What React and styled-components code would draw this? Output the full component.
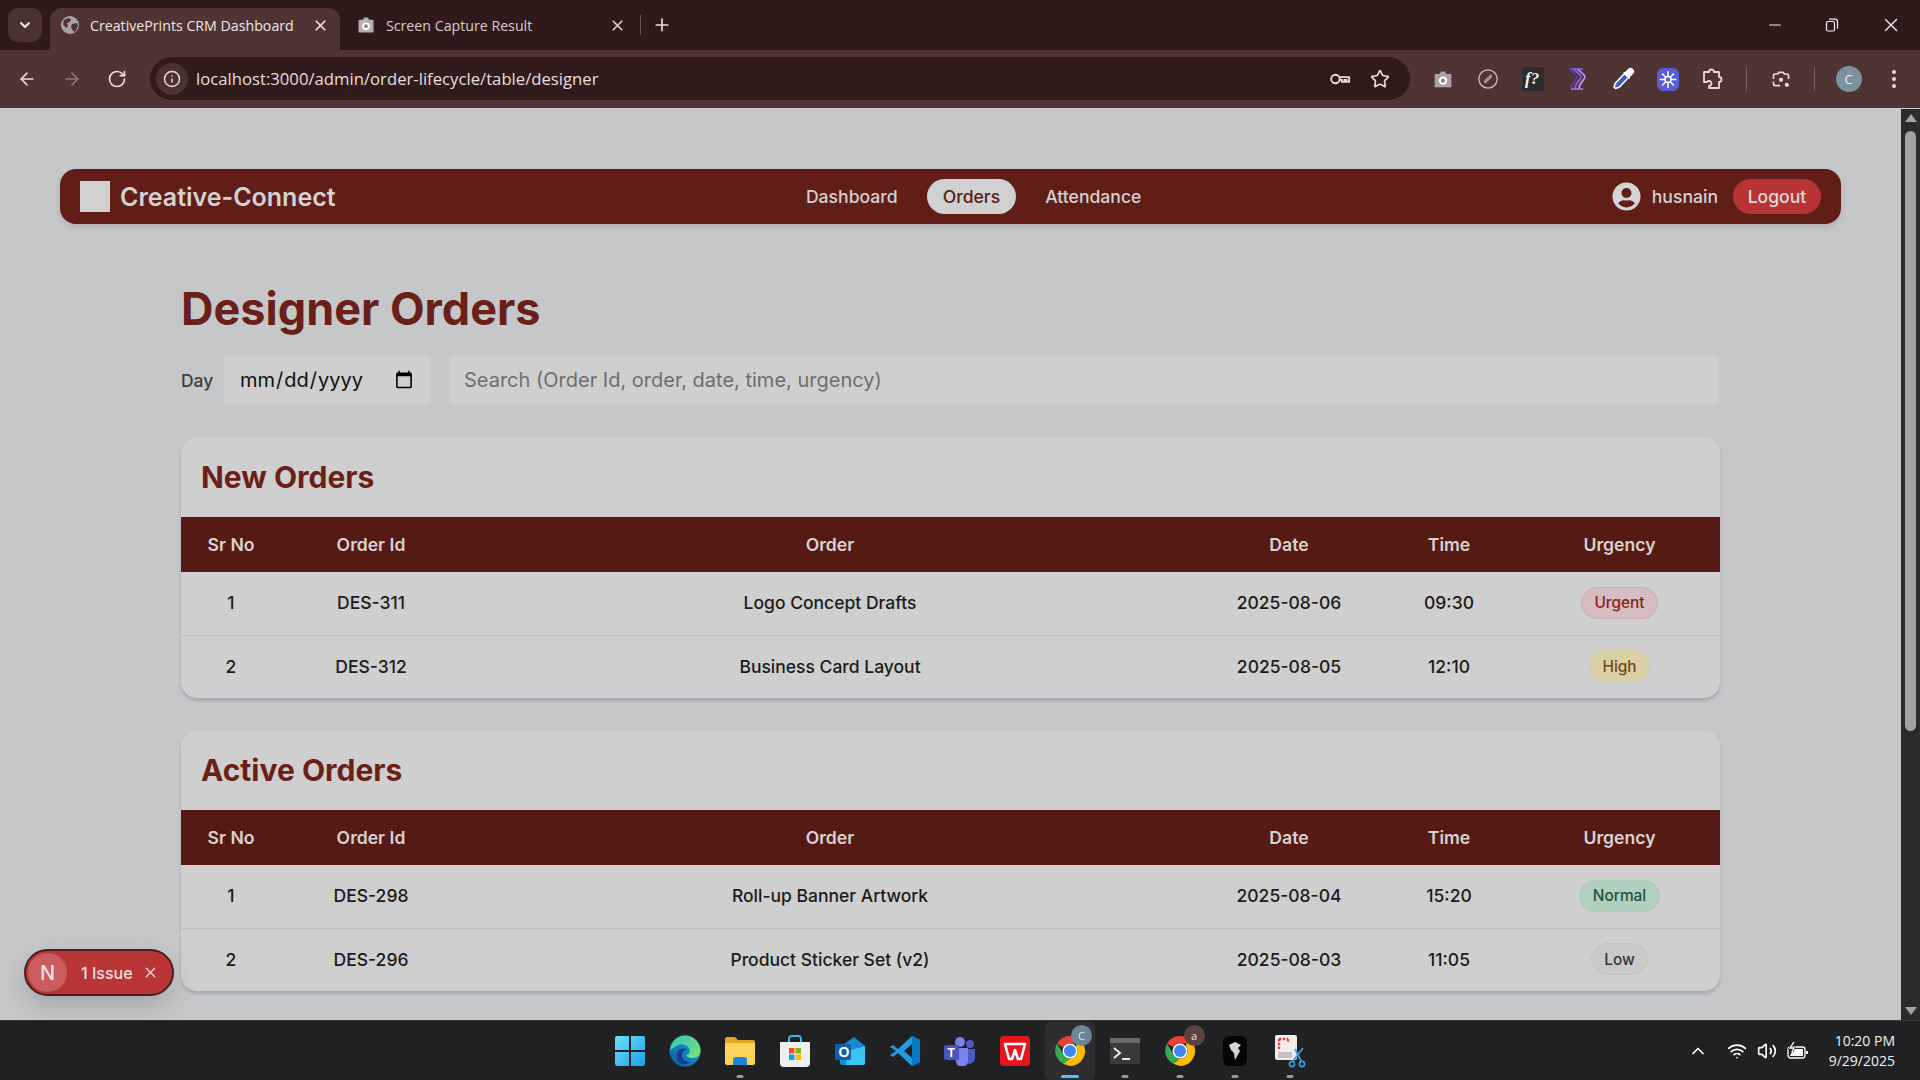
import React from "react";
import styled, { createGlobalStyle } from "styled-components";
import { FaUserCircle } from "react-icons/fa";
import { ArrowLeft, ArrowRight, RotateCw, Info, Star, Plus, X, Minus, ChevronDown, ChevronUp, Wifi, Volume2 } from "lucide-react";

const GlobalStyle = createGlobalStyle`
  html, body { margin: 0; padding: 0; height: 100%; overflow: hidden; }
  * { box-sizing: border-box; }
  body { font-family: "Inter", "Liberation Sans", sans-serif; background: #c5c7c9; }
`;

const Shell = styled.div`
  position: relative;
  display: flex;
  flex-direction: column;
  width: 1920px;
  height: 1080px;
`;

/* browser chrome */
const TabStrip = styled.div`
  display: flex;
  align-items: flex-end;
  height: 50px;
  padding-left: 8px;
  background: #2e1b19;
  color: #e6dcda;
  font-family: "Open Sans", "Noto Sans", sans-serif;
`;
const TabMenu = styled.div`
  display: flex;
  align-items: center;
  justify-content: center;
  width: 34px;
  height: 34px;
  margin: 0 8px 8px 0;
  border-radius: 10px;
  background: #4a3230;
`;
const Tab = styled.div`
  display: flex;
  align-items: center;
  width: ${(p) => p.$w}px;
  height: 42px;
  padding: 0 ${(p) => p.$right}px 8px ${(p) => p.$left}px;
  border-radius: 12px 12px 0 0;
  background: ${(p) => (p.$active ? "#4e3533" : "transparent")};
  font-size: 14.2px;
  color: ${(p) => (p.$active ? "#eee5e3" : "#d8ccca")};
  svg { flex: none; }
`;
const TabTitle = styled.span`
  flex: 1;
  margin-left: 11px;
  white-space: nowrap;
`;
const TabSep = styled.div`
  width: 1px;
  height: 20px;
  margin: 0 11px 15px 7px;
  background: #6b5452;
`;
const NewTab = styled.div`
  display: flex;
  margin-bottom: 15px;
`;
const WindowControls = styled.div`
  display: flex;
  margin: 0 18px 14px auto;
  gap: 41px;
  align-items: center;
`;
const Toolbar = styled.div`
  display: flex;
  align-items: center;
  height: 59px;
  padding: 0 0 1px 0;
  background: #4e3533;
  border-bottom: 1px solid #cfcfcf;
`;
const NavButtons = styled.div`
  display: flex;
  flex: none;
  gap: 25px;
  padding-left: 17px;
  width: 150px;
`;
const Omnibox = styled.div`
  display: flex;
  flex: none;
  align-items: center;
  width: 1260px;
  height: 43px;
  padding: 0 20px 0 6px;
  border-radius: 22px;
  background: #2f1c1a;
`;
const InfoChip = styled.div`
  display: flex;
  align-items: center;
  justify-content: center;
  width: 32px;
  height: 32px;
  border-radius: 50%;
  background: #4a3230;
`;
const Url = styled.span`
  flex: 1;
  margin-left: 8px;
  font-family: "Open Sans", "Noto Sans", sans-serif;
  font-size: 16.7px;
  color: #e8dedc;
`;
const OmniIcons = styled.div`
  display: flex;
  align-items: center;
  gap: 19px;
`;
const Extensions = styled.div`
  display: flex;
  align-items: center;
  flex: 1;
  padding-left: 10px;
`;
const ExtSlot = styled.div`
  display: flex;
  align-items: center;
  justify-content: center;
  width: 45px;
  flex: none;
`;
const BarSep = styled.div`
  width: 1px;
  height: 24px;
  margin: 0 ${(p) => p.$gap || 0}px;
  background: #75605e;
  flex: none;
`;
const Avatar = styled.div`
  display: flex;
  align-items: center;
  justify-content: center;
  width: 26px;
  height: 26px;
  border-radius: 50%;
  background: #7d919f;
  color: #e8eef2;
  font-family: "Open Sans", sans-serif;
  font-size: 13px;
`;

/* page */
const Viewport = styled.div`
  display: flex;
  height: 911px;
  overflow: hidden;
`;
const Page = styled.div`
  flex: 1;
  padding-top: 60px;
  background: #c5c7c9;
`;
const Navbar = styled.header`
  display: flex;
  align-items: center;
  justify-content: space-between;
  height: 55px;
  margin: 0 60px;
  padding: 0 20px;
  border-radius: 16px;
  background: #611e18;
  color: #d2d2d2;
  box-shadow: 0 3px 7px rgba(0, 0, 0, 0.12);
`;
const Brand = styled.div`
  display: flex;
  align-items: center;
  gap: 10px;
  font-size: 25px;
  font-weight: 600;
`;
const LogoBox = styled.div`
  width: 30px;
  height: 31px;
  background: #d0d0d0;
`;
const NavLinks = styled.nav`
  display: flex;
  gap: 14px;
`;
const NavLink = styled.a`
  display: flex;
  align-items: center;
  height: 35px;
  padding: 0 15.5px;
  border-radius: 18px;
  font-size: 17.6px;
  font-weight: 500;
  background: ${(p) => (p.$active ? "#d0d0d0" : "transparent")};
  color: ${(p) => (p.$active ? "#5a1c16" : "#d2d2d2")};
`;
const UserArea = styled.div`
  display: flex;
  align-items: center;
  font-size: 17.6px;
  font-weight: 500;
`;
const UserName = styled.span`
  margin: 0 15px 0 11px;
`;
const LogoutButton = styled.button`
  height: 35px;
  width: 88px;
  border: 0;
  border-radius: 18px;
  background: #b83434;
  color: #dcdcdc;
  font: 500 17.6px "Inter", sans-serif;
`;
const Content = styled.main`
  padding: 0 181px;
`;
const Title = styled.h1`
  margin: 0;
  padding-top: 58px;
  height: 131px;
  font-size: 45px;
  line-height: 54px;
  font-weight: 700;
  color: #6b1f19;
`;
const Filters = styled.div`
  display: flex;
  align-items: center;
  height: 50px;
`;
const DayLabel = styled.label`
  width: 42px;
  font-size: 17.4px;
  font-weight: 500;
  color: #3a3d42;
`;
const DateInput = styled.input`
  width: 209px;
  height: 50px;
  padding: 0 15px;
  margin-right: 16px;
  border: 1px solid #c9cacc;
  border-radius: 5px;
  background: #cfcfcf;
  font: 400 20px "Inter", sans-serif;
  color: #111;
  outline: none;
`;
const SearchInput = styled.input`
  flex: 1;
  height: 50px;
  padding: 0 15px;
  border: 1px solid #c9cacc;
  border-radius: 5px;
  background: #cfcfcf;
  font: 400 20px "Inter", sans-serif;
  outline: none;
  &::placeholder { color: #6e6e6e; opacity: 1; }
`;
const Card = styled.section`
  margin-top: ${(p) => p.$top}px;
  border-radius: 16px;
  overflow: hidden;
  background: #cfcfcf;
  border-top: 1px solid #c9cacc;
  box-shadow: 0 3px 3px rgba(130, 135, 150, 0.45);
`;
const CardTitle = styled.h2`
  margin: 0;
  height: 79px;
  padding-left: 20px;
  font-size: 30px;
  line-height: 79px;
  font-weight: 700;
  color: #6b1f19;
`;
const Table = styled.table`
  width: 100%;
  border-collapse: collapse;
  table-layout: fixed;
`;
const Col = styled.col`
  width: ${(p) => p.$w}px;
`;
const HeadCell = styled.th`
  height: 55px;
  padding: 0;
  background: #561a14;
  color: #d8d2d0;
  font-size: 17.6px;
  font-weight: 600;
  text-align: center;
`;
const Row = styled.tr`
  & + & td { border-top: 1px solid #bdbfc2; }
`;
const Cell = styled.td`
  height: 63px;
  padding: 0 0 1px;
  text-align: center;
  font-size: 17.5px;
  font-weight: 500;
  color: #1b1b1b;
`;
const urgencyColors = {
  Urgent: ["#d5bcbe", "#cbaeb0", "#8a1d1d"],
  High: ["#d9d0a6", "#d6cda0", "#70481a"],
  Normal: ["#b2cfbd", "#aacbb7", "#245240"],
  Low: ["#c9c9ca", "#c1c2c4", "#33373d"],
};
const Badge = styled.span`
  display: inline-flex;
  align-items: center;
  height: 32px;
  padding: 0 12.5px;
  border-radius: 16px;
  border: 1px solid ${(p) => urgencyColors[p.$level][1]};
  background: ${(p) => urgencyColors[p.$level][0]};
  color: ${(p) => urgencyColors[p.$level][2]};
  font-size: 15.4px;
  font-weight: 500;
`;
const Scrollbar = styled.div`
  display: flex;
  flex-direction: column;
  align-items: center;
  width: 19px;
  flex: none;
  background: #2b2b2b;
  padding-top: 5px;
`;
const Arrow = styled.div`
  width: 0;
  height: 0;
  border-left: 6px solid transparent;
  border-right: 6px solid transparent;
  ${(p) => (p.$down ? "border-top: 8px solid #a3a3a3; margin-top: auto; margin-bottom: 5px;" : "border-bottom: 8px solid #a3a3a3;")}
`;
const Thumb = styled.div`
  width: 11px;
  height: 600px;
  margin-top: 9px;
  border-radius: 6px;
  background: #a2a2a2;
`;

/* dev overlay */
const IssueToast = styled.div`
  position: absolute;
  left: 24px;
  top: 949px;
  display: flex;
  align-items: center;
  width: 150px;
  height: 47px;
  padding-left: 2px;
  border: 2px solid #4a1e1e;
  border-radius: 24px;
  background: #b93535;
  color: #f0e0e0;
  font-size: 16px;
  font-weight: 500;
  box-shadow: 0 10px 24px rgba(0, 0, 0, 0.16);
`;
const ToastLogo = styled.div`
  display: flex;
  align-items: center;
  justify-content: center;
  width: 39px;
  height: 39px;
  border-radius: 50%;
  background: #c95c5c;
  font-size: 20px;
`;
const ToastText = styled.span`
  margin: 0 9px 0 14px;
  white-space: nowrap;
`;

/* taskbar */
const Taskbar = styled.footer`
  display: grid;
  grid-template-columns: 1fr auto 1fr;
  align-items: center;
  height: 60px;
  background: #202122;
  border-top: 1px solid #3a3a3a;
`;
const TaskIcons = styled.div`
  grid-column: 2;
  display: flex;
`;
const TaskSlot = styled.div`
  position: relative;
  display: flex;
  align-items: center;
  justify-content: center;
  width: 55px;
  height: 58px;
  &::after {
    content: "";
    display: ${(p) => (p.$dot ? "block" : "none")};
    position: absolute;
    left: 50%;
    bottom: 2px;
    transform: translateX(-50%);
    width: ${(p) => (p.$open ? 18 : 7)}px;
    height: 3px;
    border-radius: 2px;
    background: ${(p) => (p.$open ? "#4cc2ff" : "#9a9a9a")};
  }
  ${(p) => p.$open && "background: #2e2e30; border-radius: 5px; width: 50px; margin: 0 2.5px;"}
`;
const SmallBadge = styled.span`
  position: absolute;
  top: 3px;
  right: 3px;
  display: flex;
  align-items: center;
  justify-content: center;
  width: 21px;
  height: 21px;
  border-radius: 50%;
  background: ${(p) => p.$bg};
  color: #e6e6e6;
  font: 11px "Open Sans", sans-serif;
`;
const Tray = styled.div`
  justify-self: end;
  display: flex;
  align-items: center;
  color: #fff;
  padding-right: 25px;
`;
const TrayIcons = styled.div`
  display: flex;
  align-items: center;
  gap: 10px;
  svg { flex: none; }
`;
const WifiSlot = styled.div`
  display: flex;
  margin-left: 9px;
`;
const Clock = styled.div`
  width: 76px;
  margin-left: 10px;
  text-align: right;
  font-family: "Open Sans", "Noto Sans", sans-serif;
  font-size: 14px;
  line-height: 20px;
  color: #f2f2f2;
`;

/* drawings */
const GlobeFavicon = () => (
  <svg width="18" height="18" viewBox="0 0 18 18">
    <circle cx="9" cy="9" r="9" fill="#a5a5a8" />
    <path d="M3 4l4-2 3 1-1 3-3 1 1 3-2 2-3-4zM11 8l5-1 1 3-3 6-2-1-2-4z" fill="#4e3533" />
  </svg>
);
const CameraFavicon = () => (
  <svg width="18" height="18" viewBox="0 0 24 24">
    <path d="M3 5h5l1.500-3h5L16 5h5a1 1 0 0 1 1 1v15a1 1 0 0 1-1 1H3a1 1 0 0 1-1-1V6a1 1 0 0 1 1-1z" fill="#b5b0af" />
    <circle cx="12" cy="13.500" r="5" fill="#fff" />
    <circle cx="12" cy="13.500" r="2.600" fill="#8c8786" />
  </svg>
);
const KeyIcon = () => (
  <svg width="22" height="22" viewBox="0 0 24 24" fill="none" stroke="#e8dcda" strokeWidth="2">
    <circle cx="7" cy="12" r="4.600" />
    <path d="M11.600 10h10.400v5h-3v-2h-2v2h-3v-2h-2.400" />
  </svg>
);
const CameraBadge = () => (
  <svg width="20" height="20" viewBox="0 0 24 24">
    <path d="M3 6h5l1.500-3h5L16 6h5a1 1 0 0 1 1 1v14a1 1 0 0 1-1 1H3a1 1 0 0 1-1-1V7a1 1 0 0 1 1-1z" fill="#a9a4a3" />
    <circle cx="12" cy="14" r="5" fill="#fff" />
    <circle cx="12" cy="14" r="2.600" fill="#8c8786" />
  </svg>
);
const CompassIcon = () => (
  <svg width="22" height="22" viewBox="0 0 24 24" fill="none">
    <circle cx="12" cy="12" r="10" stroke="#cfc4c2" strokeWidth="1.400" />
    <path d="M8 16l8-8" stroke="#9a9391" strokeWidth="3.400" />
  </svg>
);
const FontIcon = () => (
  <svg width="22" height="24" viewBox="0 0 22 24">
    <rect width="22" height="24" rx="2" fill="#2d2b2c" />
    <text x="3" y="17" fill="#f4f4f4" fontFamily="Liberation Serif" fontStyle="italic" fontWeight="700" fontSize="17">f?</text>
  </svg>
);
const WaveIcon = () => (
  <svg width="20" height="24" viewBox="0 0 20 24" fill="none" strokeWidth="1.700">
    <path d="M2 2h13" stroke="#7c55de" />
    <path d="M2 2c3 4 9 6 6 10-2 3-5 5-5 10" stroke="#5b3ab0" />
    <path d="M6 2c3 4 9 6 6 10-2 3-5 5-5 10" stroke="#8a63e6" />
    <path d="M10 2c3 4 9 6 6 10-2 3-5 5-5 10" stroke="#b59cf5" />
    <path d="M3 22h12" stroke="#9a78ee" />
  </svg>
);
const DropperIcon = () => (
  <svg width="24" height="24" viewBox="0 0 24 24">
    <path d="M13.500 6.500l4 4-9 9.500-4 1.500-1.500-1.500 1.500-4z" fill="#3f5bc9" stroke="#fff" strokeWidth="1.600" strokeLinejoin="round" />
    <path d="M12 5l2 0 3-3a2.800 2.800 0 0 1 5 5l-3 3 0 2z" fill="#fff" />
  </svg>
);
const SnowIcon = () => (
  <svg width="24" height="24" viewBox="0 0 24 24">
    <rect x="1" y="1" width="22" height="23" rx="6" fill="#5b5bd6" />
    <g stroke="#fff" strokeWidth="1.500">
      <path d="M12 4v17M3.500 12.500h17M6 6.500l12 12M18 6.500l-12 12" />
    </g>
    <circle cx="12" cy="12.500" r="3" fill="#5b5bd6" stroke="#fff" strokeWidth="1.500" />
  </svg>
);
const PuzzleIcon = () => (
  <svg width="24" height="24" viewBox="0 0 24 24" fill="none" stroke="#e9d9d6" strokeWidth="1.800" strokeLinejoin="round">
    <path d="M3 5h5a2.500 2.500 0 1 1 5 0h5v5a2.500 2.500 0 1 1 0 5v6H8v-2a2.500 2.500 0 1 0-2-4H3z" />
  </svg>
);
const LensIcon = () => (
  <svg width="20" height="20" viewBox="0 0 24 24" fill="none" stroke="#e9d9d6" strokeWidth="2">
    <path d="M3 12V8a2 2 0 0 1 2-2h3l1.500-2h5L16 6h3a2 2 0 0 1 2 2v4M3 15v3a2 2 0 0 0 2 2h6" />
    <circle cx="12" cy="13" r="2.500" fill="#e9d9d6" stroke="none" />
    <circle cx="19" cy="19" r="2.500" fill="#e9d9d6" stroke="none" />
  </svg>
);
const DotsIcon = () => (
  <svg width="6" height="20" viewBox="0 0 6 20" fill="#e9d9d6">
    <circle cx="3" cy="3" r="2" /><circle cx="3" cy="10" r="2" /><circle cx="3" cy="17" r="2" />
  </svg>
);
const RestoreIcon = () => (
  <svg width="14" height="14" viewBox="0 0 14 14" fill="none" stroke="#f2f2f2" strokeWidth="1.200">
    <rect x="1.500" y="3.500" width="8" height="9.500" rx="1.500" />
    <path d="M4 1.200h6a2.500 2.500 0 0 1 2.500 2.500v7" />
  </svg>
);
const WindowsLogo = () => (
  <svg width="30" height="30" viewBox="0 0 30 30">
    <defs>
      <linearGradient id="win" x1="0" y1="0" x2="1" y2="1">
        <stop offset="0" stopColor="#6fe0f8" /><stop offset="1" stopColor="#1a9fe8" />
      </linearGradient>
    </defs>
    <path d="M0 2a2 2 0 0 1 2-2h12v14H0zM16 0h12a2 2 0 0 1 2 2v12H16zM0 16h14v14H2a2 2 0 0 1-2-2zM16 16h14v12a2 2 0 0 1-2 2H16z" fill="url(#win)" />
  </svg>
);
const EdgeLogo = () => (
  <svg width="32" height="32" viewBox="0 0 32 32">
    <defs>
      <linearGradient id="edgeA" x1="0" y1="1" x2="1" y2="0">
        <stop offset="0" stopColor="#0c59a4" /><stop offset="1" stopColor="#1fa7dc" />
      </linearGradient>
      <linearGradient id="edgeB" x1="0" y1="0" x2="1" y2="1">
        <stop offset="0" stopColor="#36c7b0" /><stop offset="1" stopColor="#7be27b" />
      </linearGradient>
    </defs>
    <circle cx="16" cy="16" r="15.500" fill="url(#edgeA)" />
    <path d="M1 15C2 6 9 .5 16 .5 25 .5 31.500 8 31.500 16c0 5-4 7-8 7-3 0-6-1-6-3 3-1 4-3 3-6-2-5-9-6-13-3-3 2-5 3-6.500 4z" fill="url(#edgeB)" />
    <path d="M12 29c-5-3-6-10-2-14 2-2 6-2 8 0-4 0-6 3-5 7 1 3 4 5 8 5-3 2-6 3-9 2z" fill="#143f8c" />
  </svg>
);
const FolderLogo = () => (
  <svg width="32" height="32" viewBox="0 0 32 32">
    <path d="M1 4a2 2 0 0 1 2-2h8l3 3h15a2 2 0 0 1 2 2v3H1z" fill="#e0a81c" />
    <path d="M1 8h30v20a2 2 0 0 1-2 2H3a2 2 0 0 1-2-2z" fill="#fcd45c" />
    <path d="M9 30v-5a3 3 0 0 1 3-3h8a3 3 0 0 1 3 3v5z" fill="#1c86d8" />
  </svg>
);
const StoreLogo = () => (
  <svg width="30" height="32" viewBox="0 0 30 32">
    <path d="M9 8V4a3 3 0 0 1 3-3h6a3 3 0 0 1 3 3v4" fill="none" stroke="#33b5e6" strokeWidth="2" />
    <path d="M0 7h30v21a4 4 0 0 1-4 4H4a4 4 0 0 1-4-4z" fill="#eee" />
    <rect x="9" y="13" width="5.500" height="5.500" fill="#f25022" />
    <rect x="15.500" y="13" width="5.500" height="5.500" fill="#7fba00" />
    <rect x="9" y="19.500" width="5.500" height="5.500" fill="#00a4ef" />
    <rect x="15.500" y="19.500" width="5.500" height="5.500" fill="#ffb900" />
  </svg>
);
const OutlookLogo = () => (
  <svg width="32" height="32" viewBox="0 0 32 32">
    <path d="M6 12L20 2l11 9v17a2 2 0 0 1-2 2H8a2 2 0 0 1-2-2z" fill="#1a8ad4" />
    <path d="M14 16l17-5v17a2 2 0 0 1-2 2H12z" fill="#38c5f2" />
    <rect x="1" y="9" width="16" height="16" rx="2" fill="#0f5fb0" />
    <text x="4.500" y="22" fill="#fff" fontFamily="Liberation Sans" fontSize="14" fontWeight="700">O</text>
  </svg>
);
const VscodeLogo = () => (
  <svg width="30" height="32" viewBox="0 0 30 32">
    <path d="M22 1l8 4v22l-8 4L8 18l-5 4-3-2 6-4-6-4 3-2 5 4z" fill="#1f9ce4" />
    <path d="M22 1l8 4v22l-8 4z" fill="#0b7ac4" />
    <path d="M22 9l-8 7 8 7z" fill="#202122" />
  </svg>
);
const TeamsLogo = () => (
  <svg width="32" height="30" viewBox="0 0 32 30">
    <circle cx="16" cy="6" r="5" fill="#7b83eb" />
    <circle cx="26" cy="8" r="4" fill="#5059c9" />
    <path d="M20 13h11v9a6 6 0 0 1-11 3z" fill="#5059c9" />
    <path d="M9 12h15v12a6 6 0 0 1-12 2z" fill="#7b83eb" />
    <rect x="0" y="9" width="15" height="15" rx="2" fill="#4b53bc" />
    <text x="3.500" y="21" fill="#fff" fontFamily="Liberation Sans" fontSize="12" fontWeight="700">T</text>
  </svg>
);
const WpsLogo = () => (
  <svg width="30" height="30" viewBox="0 0 30 30">
    <rect width="30" height="30" rx="4" fill="#e8141d" />
    <path d="M5 8h20l-4 15h-3l-3-9-3 9H9z" fill="none" stroke="#fff" strokeWidth="2.600" strokeLinejoin="round" />
  </svg>
);
const ChromeLogo = () => (
  <svg width="32" height="32" viewBox="0 0 32 32">
    <path d="M16 1a15 15 0 0 1 13 7.500H16a7.500 7.500 0 0 0-6.500 3.750L3 8.500A15 15 0 0 1 16 1z" fill="#ea4335" />
    <path d="M3 8.500l6.500 11.250A7.500 7.500 0 0 0 16 23.500L9.500 29A15 15 0 0 1 3 8.500z" fill="#34a853" />
    <path d="M29 8.500A15 15 0 0 1 16 31l-6.500-2L16 23.500a7.500 7.500 0 0 0 6.500-11.250L22 8.500z" fill="#fbbc04" />
    <circle cx="16" cy="16" r="7.500" fill="#fff" />
    <circle cx="16" cy="16" r="6" fill="#4285f4" />
  </svg>
);
const TerminalLogo = () => (
  <svg width="30" height="26" viewBox="0 0 30 26">
    <rect width="30" height="26" rx="2" fill="#3a3a3a" />
    <rect width="30" height="5" fill="#6a6a6a" />
    <path d="M4 10l6 5-6 5" fill="none" stroke="#e8e8e8" strokeWidth="2" />
    <path d="M12 21h8" stroke="#e8e8e8" strokeWidth="2" />
  </svg>
);
const BlackAppLogo = () => (
  <svg width="24" height="30" viewBox="0 0 24 30">
    <rect width="24" height="30" rx="6" fill="#050505" />
    <path d="M6 9l6-3 6 3-3 3 2 3-5 9-1-7-3-3z" fill="#d5d5d5" />
  </svg>
);
const SnipLogo = () => (
  <svg width="32" height="34" viewBox="0 0 32 34">
    <rect x="1" y="1" width="22" height="25" rx="2" fill="#f1ecec" />
    <path d="M5 5h9M5 5v10M14 5v3" stroke="#d6453f" strokeWidth="2.400" strokeDasharray="2.400 1.400" fill="none" />
    <rect x="4" y="18" width="14" height="6" fill="#c2c2c2" />
    <path d="M29 14L19 27M21 15l6 12" stroke="#3c9ed8" strokeWidth="1.800" fill="none" />
    <circle cx="18" cy="30" r="2.600" fill="none" stroke="#3c9ed8" strokeWidth="1.600" />
    <circle cx="28" cy="30" r="2.600" fill="none" stroke="#3c9ed8" strokeWidth="1.600" />
  </svg>
);
const BatteryIcon = () => (
  <svg width="22" height="18" viewBox="0 0 22 18" fill="none" stroke="#fff" strokeWidth="1.300">
    <rect x="1" y="5" width="17" height="11" rx="2.500" />
    <path d="M3 14l3-7h10v7z" fill="#fff" stroke="none" />
    <path d="M20 9v3" strokeWidth="2" />
    <path d="M7 0L3 6h4l-2 4" stroke="#202122" strokeWidth="2.400" />
    <path d="M7 0L3 6h4l-2 4" />
  </svg>
);

const newOrders = [
  { id: "DES-311", order: "Logo Concept Drafts", date: "2025-08-06", time: "09:30", urgency: "Urgent" },
  { id: "DES-312", order: "Business Card Layout", date: "2025-08-05", time: "12:10", urgency: "High" },
];
const activeOrders = [
  { id: "DES-298", order: "Roll-up Banner Artwork", date: "2025-08-04", time: "15:20", urgency: "Normal" },
  { id: "DES-296", order: "Product Sticker Set (v2)", date: "2025-08-03", time: "11:05", urgency: "Low" },
];

function OrdersCard({ title, rows, top }) {
  return (
    <Card $top={top}>
      <CardTitle>{title}</CardTitle>
      <Table>
        <colgroup>
          <Col $w={100} /><Col $w={180} /><Col $w={738} /><Col $w={180} /><Col $w={140} /><Col $w={201} />
        </colgroup>
        <thead>
          <tr>
            <HeadCell>Sr No</HeadCell>
            <HeadCell>Order Id</HeadCell>
            <HeadCell>Order</HeadCell>
            <HeadCell>Date</HeadCell>
            <HeadCell>Time</HeadCell>
            <HeadCell>Urgency</HeadCell>
          </tr>
        </thead>
        <tbody>
          {rows.map((r, i) => (
            <Row key={r.id}>
              <Cell>{i + 1}</Cell>
              <Cell>{r.id}</Cell>
              <Cell>{r.order}</Cell>
              <Cell>{r.date}</Cell>
              <Cell>{r.time}</Cell>
              <Cell><Badge $level={r.urgency}>{r.urgency}</Badge></Cell>
            </Row>
          ))}
        </tbody>
      </Table>
    </Card>
  );
}

export default function App() {
  return (
    <Shell>
      <GlobalStyle />
      <TabStrip>
        <TabMenu><ChevronDown size={16} strokeWidth={3} color="#eee" /></TabMenu>
        <Tab $active $w={290} $left={11} $right={11}>
          <GlobeFavicon />
          <TabTitle>CreativePrints CRM Dashboard</TabTitle>
          <X size={17} strokeWidth={2.4} />
        </Tab>
        <Tab $w={293} $left={17} $right={7.5}>
          <CameraFavicon />
          <TabTitle>Screen Capture Result</TabTitle>
          <X size={17} strokeWidth={2.4} />
        </Tab>
        <TabSep />
        <NewTab><Plus size={20} /></NewTab>
        <WindowControls>
          <Minus size={18} color="#f2f2f2" strokeWidth={1.5} />
          <RestoreIcon />
          <X size={22} color="#f2f2f2" strokeWidth={1.5} />
        </WindowControls>
      </TabStrip>
      <Toolbar>
        <NavButtons>
          <ArrowLeft size={20} color="#eadcd9" />
          <ArrowRight size={20} color="#8d7b79" />
          <RotateCw size={20} color="#eadcd9" />
        </NavButtons>
        <Omnibox>
          <InfoChip><Info size={18} color="#eadcd9" /></InfoChip>
          <Url>localhost:3000/admin/order-lifecycle/table/designer</Url>
          <OmniIcons>
            <KeyIcon />
            <Star size={20} color="#e8dcda" />
          </OmniIcons>
        </Omnibox>
        <Extensions>
          <ExtSlot><CameraBadge /></ExtSlot>
          <ExtSlot><CompassIcon /></ExtSlot>
          <ExtSlot><FontIcon /></ExtSlot>
          <ExtSlot><WaveIcon /></ExtSlot>
          <ExtSlot><DropperIcon /></ExtSlot>
          <ExtSlot><SnowIcon /></ExtSlot>
          <ExtSlot><PuzzleIcon /></ExtSlot>
          <BarSep $gap={11} />
          <ExtSlot><LensIcon /></ExtSlot>
          <BarSep $gap={11} />
          <ExtSlot><Avatar>C</Avatar></ExtSlot>
          <ExtSlot><DotsIcon /></ExtSlot>
        </Extensions>
      </Toolbar>

      <Viewport>
        <Page>
          <Navbar>
            <Brand><LogoBox />Creative-Connect</Brand>
            <NavLinks>
              <NavLink>Dashboard</NavLink>
              <NavLink $active>Orders</NavLink>
              <NavLink>Attendance</NavLink>
            </NavLinks>
            <UserArea>
              <FaUserCircle size={29} color="#d4d4d4" />
              <UserName>husnain</UserName>
              <LogoutButton>Logout</LogoutButton>
            </UserArea>
          </Navbar>
          <Content>
            <Title>Designer Orders</Title>
            <Filters>
              <DayLabel>Day</DayLabel>
              <DateInput type="date" />
              <SearchInput placeholder="Search (Order Id, order, date, time, urgency)" />
            </Filters>
            <OrdersCard title="New Orders" rows={newOrders} top={32} />
            <OrdersCard title="Active Orders" rows={activeOrders} top={32} />
          </Content>
        </Page>
        <Scrollbar>
          <Arrow />
          <Thumb />
          <Arrow $down />
        </Scrollbar>
      </Viewport>

      <IssueToast>
        <ToastLogo>N</ToastLogo>
        <ToastText>1 Issue</ToastText>
        <X size={17} strokeWidth={1.8} />
      </IssueToast>

      <Taskbar>
        <TaskIcons>
          <TaskSlot><WindowsLogo /></TaskSlot>
          <TaskSlot><EdgeLogo /></TaskSlot>
          <TaskSlot $dot><FolderLogo /></TaskSlot>
          <TaskSlot><StoreLogo /></TaskSlot>
          <TaskSlot><OutlookLogo /></TaskSlot>
          <TaskSlot><VscodeLogo /></TaskSlot>
          <TaskSlot><TeamsLogo /></TaskSlot>
          <TaskSlot><WpsLogo /></TaskSlot>
          <TaskSlot $dot $open><ChromeLogo /><SmallBadge $bg="#6d8596">C</SmallBadge></TaskSlot>
          <TaskSlot $dot><TerminalLogo /></TaskSlot>
          <TaskSlot $dot><ChromeLogo /><SmallBadge $bg="#5a4440">a</SmallBadge></TaskSlot>
          <TaskSlot $dot><BlackAppLogo /></TaskSlot>
          <TaskSlot $dot><SnipLogo /></TaskSlot>
        </TaskIcons>
        <Tray>
          <TrayIcons>
            <ChevronUp size={20} />
            <WifiSlot><Wifi size={20} /></WifiSlot>
            <Volume2 size={20} />
            <BatteryIcon />
          </TrayIcons>
          <Clock>10:20 PM<br />9/29/2025</Clock>
        </Tray>
      </Taskbar>
    </Shell>
  );
}
